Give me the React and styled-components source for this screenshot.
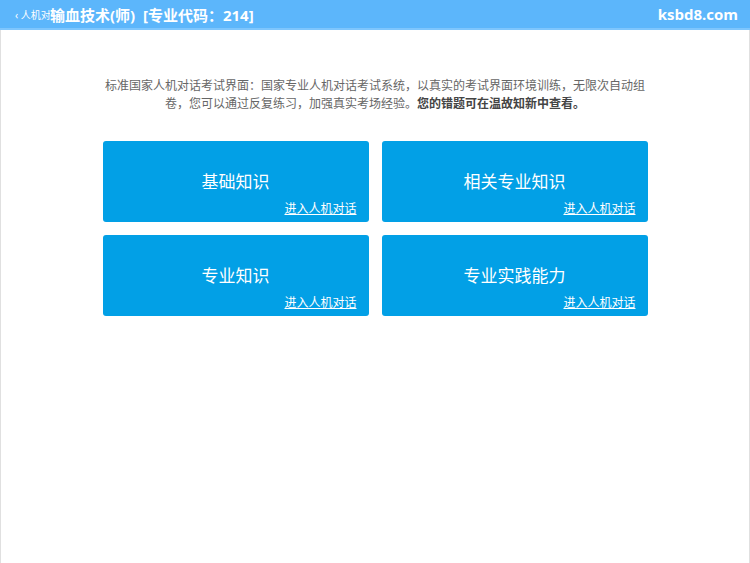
import styled, { createGlobalStyle } from "styled-components";

const GlobalStyle = createGlobalStyle`
  html, body {
    margin: 0;
    padding: 0;
    background: #fff;
    font-family: "Noto Sans", "Noto Sans CJK SC", sans-serif;
  }
`

const cards = [
  { title: "基础知识" },
  { title: "相关专业知识" },
  { title: "专业知识" },
  { title: "专业实践能力" },
]

const App = () => {
  return (
    <Page>
      <GlobalStyle />
      <Header>
        <Back>‹&nbsp;人机对话</Back>
        <Title>输血技术(师)&nbsp;&nbsp;[专业代码：214]</Title>
        <Site>ksbd8.com</Site>
      </Header>
      <Body>
        <Intro>
          标准国家人机对话考试界面：国家专业人机对话考试系统，以真实的考试界面环境训练，无限次自动组卷，您可以通过反复练习，加强真实考场经验。
          <strong>您的错题可在温故知新中查看。</strong>
        </Intro>
        <Grid>
          {cards.map((c) => (
            <Card key={c.title}>
              <CardTitle>{c.title}</CardTitle>
              <CardLink href="#">进入人机对话</CardLink>
            </Card>
          ))}
        </Grid>
      </Body>
    </Page>
  )
}

const Page = styled.div`
  width: 750px;
  height: 563px;
  display: flex;
  flex-direction: column;
  overflow: hidden;
`

const Header = styled.header`
  height: 28px;
  flex-shrink: 0;
  background: #5cb6fb;
  border-bottom: 2px solid #7ec6fd;
  display: flex;
  align-items: center;
  padding: 0 12px 0 15px;
  color: #fff;
`

const Back = styled.span`
  width: 35px;
  overflow: hidden;
  white-space: nowrap;
  font-size: 10px;
  flex-shrink: 0;
`

const Title = styled.h1`
  margin: 0;
  font-size: 15px;
  font-weight: bold;
  white-space: nowrap;
`

const Site = styled.span`
  margin-left: auto;
  font-size: 15px;
  font-weight: bold;
  font-family: "Open Sans", "Noto Sans", sans-serif;
`

const Body = styled.main`
  flex: 1;
  border-left: 1px solid #e0e0e0;
  border-right: 1px solid #e0e0e0;
  display: flex;
  flex-direction: column;
  align-items: center;
  padding-top: 46px;
`

const Intro = styled.p`
  margin: 0;
  width: 540px;
  font-size: 12px;
  line-height: 18px;
  color: #666;
  text-align: center;
  font-family: "Noto Sans CJK SC", sans-serif;

  strong {
    color: #444;
    font-weight: bold;
  }
`

const Grid = styled.div`
  margin-top: 29px;
  display: grid;
  grid-template-columns: 266px 266px;
  column-gap: 13px;
  row-gap: 13px;
`

const Card = styled.div`
  height: 81px;
  background: #02a0e6;
  border-radius: 3px;
  display: flex;
  flex-direction: column;
  align-items: center;
  color: #fff;
  padding: 0 12px 0 12px;
  box-sizing: border-box;
`

const CardTitle = styled.div`
  margin-top: 28px;
  font-size: 17px;
  line-height: 24px;
  font-family: "Noto Sans CJK SC", sans-serif;
`

const CardLink = styled.a`
  align-self: flex-end;
  margin-top: 7px;
  font-size: 12px;
  line-height: 16px;
  color: #fff;
  text-decoration: underline;
  font-family: "Noto Sans CJK SC", sans-serif;
`

export default App
